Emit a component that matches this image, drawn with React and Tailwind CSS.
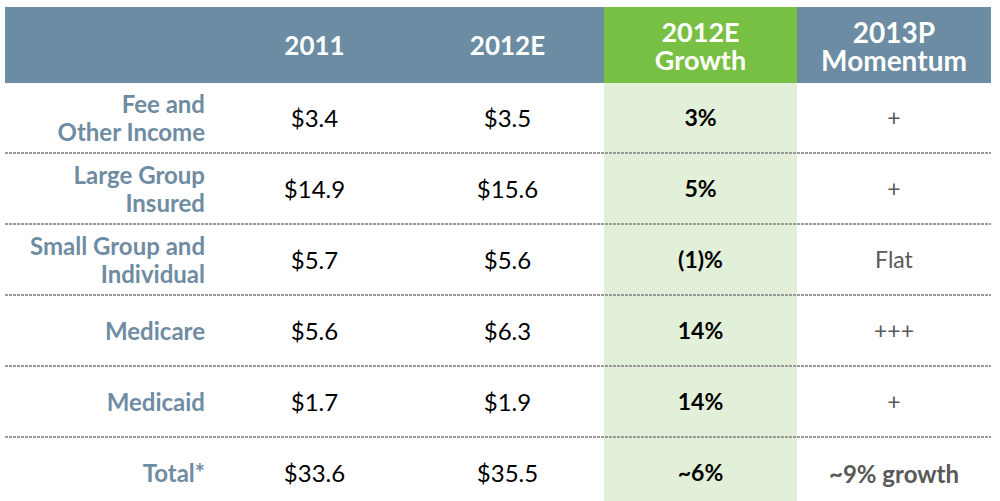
import React from 'react';

const rows = [
  { label: ['Fee and', 'Other Income'], y11: '$3.4', y12: '$3.5', growth: '3%', momentum: '+' },
  { label: ['Large Group', 'Insured'], y11: '$14.9', y12: '$15.6', growth: '5%', momentum: '+' },
  { label: ['Small Group and', 'Individual'], y11: '$5.7', y12: '$5.6', growth: '(1)%', momentum: 'Flat' },
  { label: ['Medicare'], y11: '$5.6', y12: '$6.3', growth: '14%', momentum: '+++' },
  { label: ['Medicaid'], y11: '$1.7', y12: '$1.9', growth: '14%', momentum: '+' },
  { label: ['Total*'], y11: '$33.6', y12: '$35.5', growth: '~6%', momentum: '~9% growth', total: true }
];

const cols = 'grid grid-cols-[213px_193px_193px_193px_194px]';

const Dots = () => (
  <div className="h-[2px] w-full bg-[repeating-linear-gradient(to_right,#9a9a9a_0_3px,transparent_3px_4px)]" />
);

export default function App() {
  return (
    <div className="h-[501px] w-[1000px] overflow-hidden bg-white pl-[5px] pt-[7px] font-['Lato',sans-serif]">
      <div className="w-[986px]">
        {/* Header */}
        <div className={`${cols} h-[76px] bg-[#6b8ca3] text-[26px] font-bold leading-[29px] text-white`}>
          <div />
          <div className="flex items-center justify-center">2011</div>
          <div className="flex items-center justify-center">2012E</div>
          <div className="flex flex-col items-center justify-center bg-[#78c043] pt-[2px] text-[27px] leading-[28px]">
            <span>2012E</span>
            <span>Growth</span>
          </div>
          <div className="flex flex-col items-center justify-center pt-[2px] text-[28px] leading-[28px]">
            <span>2013P</span>
            <span>Momentum</span>
          </div>
        </div>

        {/* Body */}
        {rows.map((r, i) => (
          <div key={i}>
            <div className={`${cols} h-[69px] items-stretch`}>
              <div className="flex flex-col items-end justify-center pr-[13px] text-[24px] font-bold leading-[28px] text-[#6f8ca2]">
                {r.label.map(l => <span key={l}>{l}</span>)}
              </div>
              <div className="flex items-center justify-center text-[24px] text-black">{r.y11}</div>
              <div className="flex items-center justify-center text-[24px] text-black">{r.y12}</div>
              <div className="flex items-center justify-center bg-[#e3f0d9] text-[23px] font-bold text-black">{r.growth}</div>
              <div className={`flex items-center justify-center text-[#595959] ${r.total ? 'pt-[2px] text-[24px] font-bold' : 'text-[23px]'}`}>
                {r.momentum}
              </div>
            </div>
            {!r.total && (
              <div className="relative">
                <div className="absolute left-[599px] top-0 h-[2px] w-[193px] bg-[#e3f0d9]" />
                <div className="relative"><Dots /></div>
              </div>
            )}
          </div>
        ))}
      </div>
    </div>
  );
}
